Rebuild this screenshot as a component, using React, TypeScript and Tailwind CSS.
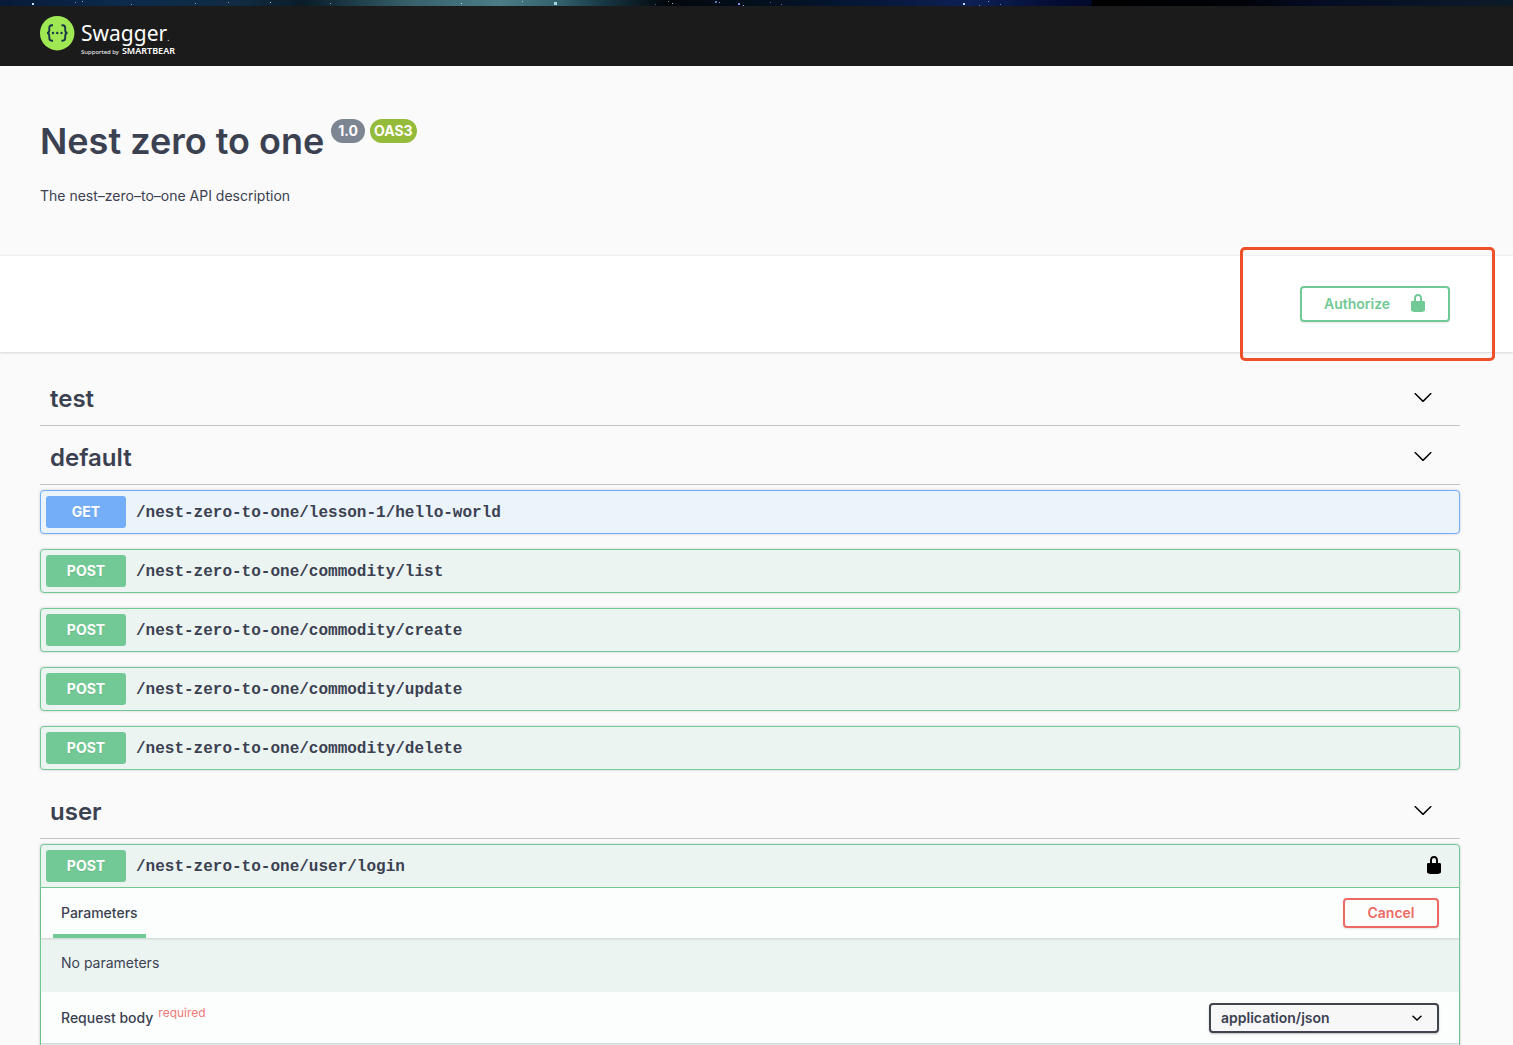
import React from "react";

const STARS = [
  [32, 3, 2, "#c9e0f2"], [75, 2, 1, "#6f9fc9"], [82, 1, 1, "#88b4d8"], [131, 4, 1, "#7aa5c7"],
  [195, 3, 1, "#8fb3c8"], [228, 2, 1, "#7ea6bd"], [270, 2, 1, "#b7d3de"], [330, 3, 1, "#8fb0bb"],
  [461, 3, 1, "#cfe6ea"], [522, 1, 1, "#a9cdd3"], [554, 2, 3, "#a8d4e2"], [655, 4, 1, "#3c6b9b"],
  [668, 1, 1, "#5d8ec2"], [672, 3, 1, "#8fb9e6"], [715, 1, 2, "#5579c0"], [719, 2, 1, "#7ba0e2"],
  [738, 3, 2, "#7c8fe0"], [743, 5, 1, "#9bb0f0"], [770, 2, 1, "#4a5fae"], [781, 4, 1, "#5b73c0"],
  [963, 3, 2, "#bcd2f5"], [979, 5, 1, "#6c8ac4"], [988, 1, 1, "#8aa3d0"], [1000, 4, 1, "#5f7fb8"],
] as const;

function SkyStrip() {
  return (
    <svg aria-hidden="true" className="block h-[6px] w-full" viewBox="0 0 1513 6" preserveAspectRatio="none">
      <defs>
        <linearGradient id="sky">
          <stop offset="0" stopColor="#071a38" />
          <stop offset="0.08" stopColor="#0d2a4c" />
          <stop offset="0.16" stopColor="#102b41" />
          <stop offset="0.2" stopColor="#0b1c28" />
          <stop offset="0.22" stopColor="#142f3a" />
          <stop offset="0.27" stopColor="#37606b" />
          <stop offset="0.33" stopColor="#4a7d87" />
          <stop offset="0.37" stopColor="#33606d" />
          <stop offset="0.4" stopColor="#173643" />
          <stop offset="0.44" stopColor="#02070b" />
          <stop offset="0.52" stopColor="#041223" />
          <stop offset="0.58" stopColor="#07173a" />
          <stop offset="0.64" stopColor="#0d2156" />
          <stop offset="0.7" stopColor="#040c33" />
          <stop offset="0.721" stopColor="#040a2c" />
          <stop offset="0.722" stopColor="#000000" />
          <stop offset="0.82" stopColor="#010308" />
          <stop offset="0.87" stopColor="#050c24" />
          <stop offset="1" stopColor="#0c1b28" />
        </linearGradient>
      </defs>
      <rect width="1513" height="6" fill="url(#sky)" />
      {STARS.map(([x, y, size, fill]) => (
        <rect key={x} x={x} y={y} width={size} height={size} fill={fill} />
      ))}
    </svg>
  );
}

function Logo() {
  return (
    <a href="#" aria-label="Swagger" className="flex w-fit items-start gap-[6px] text-white">
      <svg aria-hidden="true" className="mt-px size-[35px]" viewBox="0 0 35 35" fill="none">
        <circle cx="17.2" cy="17.2" r="17.2" fill="#9fe854" />
        <g stroke="#173647" strokeWidth="1.9">
          <path d="M13 9.3h-1.2c-1.900 0-2.500 1-2.500 2.600v2.200c0 1.700-.7 2.900-2.300 2.900 1.600 0 2.300 1.200 2.300 2.900v2.200c0 1.600.6 2.600 2.500 2.600H13" />
          <path d="M21.500 9.300h1.200c1.900 0 2.500 1 2.500 2.600v2.200c0 1.700.7 2.900 2.300 2.900-1.600 0-2.300 1.200-2.300 2.900v2.200c0 1.600-.6 2.600-2.500 2.600h-1.200" />
        </g>
        <g fill="#173647">
          <circle cx="13" cy="17" r="1.200" />
          <circle cx="17.250" cy="17" r="1.200" />
          <circle cx="21.500" cy="17" r="1.200" />
        </g>
      </svg>
      <span className="flex flex-col pt-[6px]">
        <span className="font-['Noto_Sans'] text-[21px] leading-[24px]">
          Swagger<span className="text-[8px]">.</span>
        </span>
        <span className="-mt-[3px] flex items-baseline gap-[3px] font-['Noto_Sans'] leading-[8px]">
          <span className="text-[6px]">Supported by</span>
          <span className="text-[9px] font-semibold">SMARTBEAR</span>
        </span>
      </span>
    </a>
  );
}

function LockIcon() {
  return (
    <svg aria-hidden="true" className="size-5" viewBox="0 0 20 20" fill="currentColor">
      <path d="M15.800 8H14V5.600C14 2.703 12.665 1 10 1 7.334 1 6 2.703 6 5.600V8H4c-.553 0-1 .646-1 1.199V17c0 .549.428 1.139.951 1.307l1.197.387C5.672 18.861 6.550 19 7.100 19h5.800c.549 0 1.428-.139 1.951-.307l1.196-.387c.524-.167.953-.757.953-1.306V9.199C17 8.646 16.352 8 15.800 8zM12 8H8V5.199C8 3.754 8.797 3 10 3c1.203 0 2 .754 2 2.199V8z" />
    </svg>
  );
}

function Chevron({ className }: { className: string }) {
  return (
    <svg aria-hidden="true" className={className} viewBox="0 0 20 20" fill="currentColor">
      <path d="M17.418 6.109c.272-.268.709-.268.979 0s.271.701 0 .969l-7.908 7.830c-.270.268-.707.268-.979 0l-7.908-7.830c-.270-.268-.270-.701 0-.969.271-.268.709-.268.979 0L10 13.250l7.418-7.141z" />
    </svg>
  );
}

function Tag({ name, children }: { name: string; children?: React.ReactNode }) {
  return (
    <section>
      <h2 className="mb-[5px] border-b border-[#3b4151]/30">
        <button type="button" className="flex w-full items-start justify-between pt-3 pr-[27px] pb-[11px] pl-[10px] text-[24px] leading-[30px] font-semibold">
          <span>{name}</span>
          <Chevron className="mt-[3px] size-5 text-black" />
        </button>
      </h2>
      {children && <div className="flex flex-col gap-[15px] pb-[15px]">{children}</div>}
    </section>
  );
}

function Operation({ method, path, locked, children }: {
  method: "GET" | "POST";
  path: string;
  locked?: boolean;
  children?: React.ReactNode;
}) {
  const get = method === "GET";
  return (
    <article className={`rounded-[4px] border shadow-[0_0_3px_rgba(0,0,0,0.19)] ${get ? "border-[#72adf8] bg-[#ebf3fb]" : "border-[#71c995] bg-[#ebf4f1]"}`}>
      <div className={`flex items-center p-[5px] ${children ? "border-b border-[#71c995]" : ""}`}>
        <button type="button" className="flex min-w-0 flex-1 items-baseline gap-[10px] text-left">
          <span className={`w-20 rounded-[3px] text-center text-[14px] leading-8 font-bold text-white [text-shadow:0_1px_0_rgba(0,0,0,0.1)] ${get ? "bg-[#74aef8]" : "bg-[#72c995]"}`}>
            {method}
          </span>
          <span className="font-['Liberation_Mono',monospace] text-[16px] leading-5 font-bold">{path}</span>
        </button>
        {locked && (
          <button type="button" aria-label="Authorization required" className="px-[10px] pb-[2px] text-black">
            <LockIcon />
          </button>
        )}
      </div>
      {children}
    </article>
  );
}

export default function App() {
  return (
    <div className="h-screen overflow-hidden bg-[#fafafa] font-[Inter,sans-serif] text-[14px] text-[#3b4151]">
      <SkyStrip />
      <header className="h-[60px] bg-[#1b1b1b] px-10 pt-[9px]">
        <Logo />
      </header>

      <section className="pt-[50px] pr-[53px] pb-[49px] pl-10">
        <div className="flex items-start gap-[7px]">
          <h1 className="text-[36px] leading-[50px] font-semibold">Nest zero to one</h1>
          <div className="flex gap-[5px] pt-[3px] text-[14px] leading-6 font-bold text-white">
            <span className="rounded-full bg-[#7d8492] px-[7px]">1.0</span>
            <span className="rounded-full bg-[#95bb3a] px-1">OAS3</span>
          </div>
        </div>
        <p className="mt-[20px] leading-5">The nest–zero–to–one API description</p>
      </section>

      <section className="relative flex justify-end border-t border-[#f0f0f0] bg-white py-[30px] pr-[63px] pl-10 shadow-[0_1px_2px_rgba(0,0,0,0.15)]">
        <button type="button" className="flex h-9 w-[150px] items-center justify-between rounded-[4px] border-2 border-[#71c995] pr-5 pb-[2px] pl-[22px] font-semibold text-[#71c995] shadow-[0_1px_2px_rgba(0,0,0,0.1)]">
          Authorize
          <LockIcon />
        </button>
        <div aria-hidden="true" className="pointer-events-none absolute -top-[9px] right-[18px] h-[114px] w-[255px] rounded-[5px] border-3 border-[#ee5029]" />
      </section>

      <main className="pt-[20px] pr-[53px] pl-10">
        <Tag name="test" />
        <Tag name="default">
          <Operation method="GET" path="/nest-zero-to-one/lesson-1/hello-world" />
          <Operation method="POST" path="/nest-zero-to-one/commodity/list" />
          <Operation method="POST" path="/nest-zero-to-one/commodity/create" />
          <Operation method="POST" path="/nest-zero-to-one/commodity/update" />
          <Operation method="POST" path="/nest-zero-to-one/commodity/delete" />
        </Tag>
        <Tag name="user">
          <Operation method="POST" path="/nest-zero-to-one/user/login" locked>
            <div className="relative flex items-center justify-between bg-[#fcfefd] pr-5 pl-3 shadow-[0_1px_2px_rgba(0,0,0,0.15)]">
              <h3 className="border-b-4 border-[#71c995] px-2 pt-1 leading-[42px] font-medium">Parameters</h3>
              <button type="button" className="h-[30px] w-24 rounded-[4px] border-2 border-[#ed6a64] pb-px leading-5 font-semibold text-[#ed6a64] shadow-[0_1px_2px_rgba(0,0,0,0.1)]">
                Cancel
              </button>
            </div>
            <p className="px-5 pt-[15px] pb-[19px] leading-5">No parameters</p>
            <div className="relative flex items-center justify-between bg-[#fcfefd] px-5 pt-[11px] pb-[10px] shadow-[0_1px_2px_rgba(0,0,0,0.15)]">
              <h3 className="flex items-start gap-[5px] leading-5 font-medium">
                <label htmlFor="content-type">Request body</label>
                <span className="text-[12px] leading-[10px] font-normal text-[#ee7a76]">required</span>
              </h3>
              <div className="relative">
                <select id="content-type" className="block h-[30px] w-[230px] appearance-none rounded-[4px] border-2 border-[#41444e] bg-[#f7f7f7] px-[10px] pb-px font-semibold shadow-[0_1px_2px_rgba(0,0,0,0.25)]">
                  <option>application/json</option>
                </select>
                <svg aria-hidden="true" className="pointer-events-none absolute top-[10px] right-[17px] size-[10px] text-black" viewBox="0 0 10 10" fill="none" stroke="currentColor" strokeWidth="1.5" strokeLinecap="round">
                  <path d="M1 3.200l4 3.800 4-3.800" />
                </svg>
              </div>
            </div>
            <div className="h-40" />
          </Operation>
        </Tag>
      </main>
    </div>
  );
}
